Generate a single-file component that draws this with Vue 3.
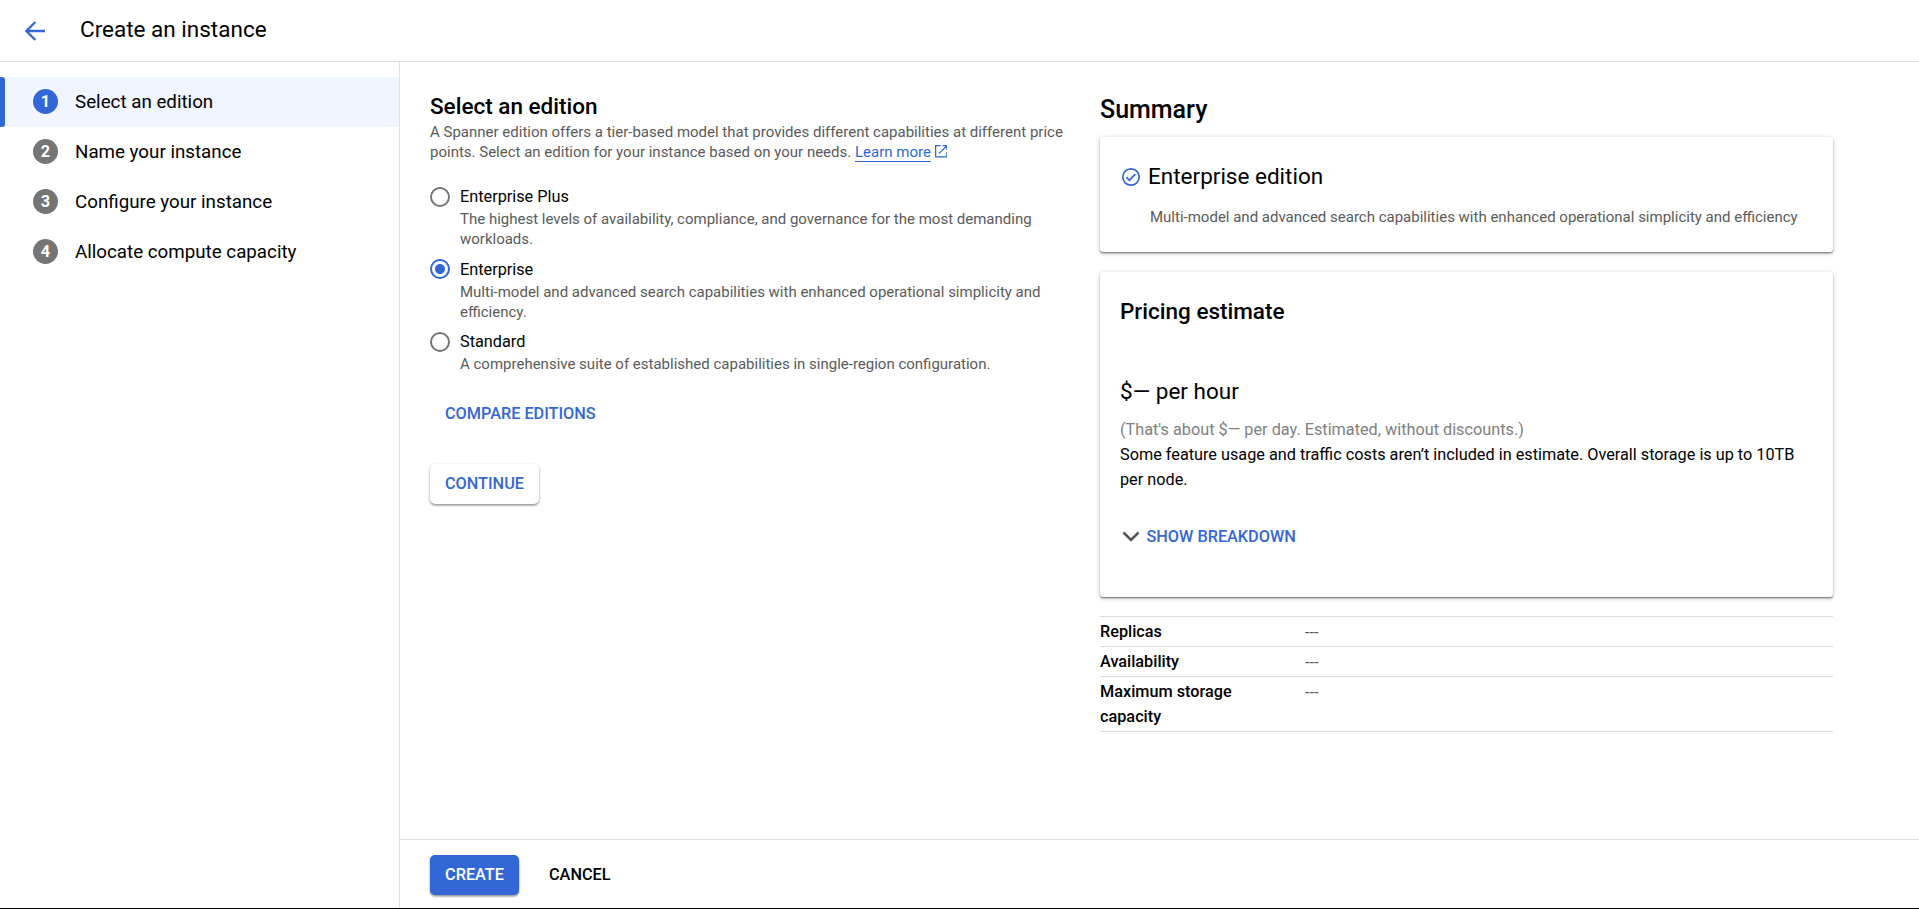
<script setup>
const steps = ['Select an edition', 'Name your instance', 'Configure your instance', 'Allocate compute capacity']

const editions = [
  { name: 'Enterprise Plus', text: 'The highest levels of availability, compliance, and governance for the most demanding workloads.' },
  { name: 'Enterprise', text: 'Multi-model and advanced search capabilities with enhanced operational simplicity and efficiency.', selected: true },
  { name: 'Standard', text: 'A comprehensive suite of established capabilities in single-region configuration.' },
]

const details = [
  { label: 'Replicas', value: '---' },
  { label: 'Availability', value: '---' },
  { label: 'Maximum storage capacity', value: '---' },
]
</script>

<template>
  <div class="page">
    <header class="header">
      <svg class="back" viewBox="0 0 24 24"><path d="M20 12H5.2M12.3 4.800L5.100 12l7.200 7.200" fill="none" stroke="currentColor" stroke-width="1.9" /></svg>
      <h1>Create an instance</h1>
    </header>

    <div class="body">
      <nav class="steps">
        <div v-for="(step, i) in steps" :key="step" class="step" :class="{ active: i === 0 }">
          <span class="num">{{ i + 1 }}</span>
          <span>{{ step }}</span>
        </div>
      </nav>

      <div class="main">
        <div class="content">
          <section class="form">
            <h2>Select an edition</h2>
            <p class="intro">A Spanner edition offers a tier-based model that provides different capabilities at different price points. Select an edition for your instance based on your needs. <a class="link">Learn more</a><svg class="external" viewBox="0 0 18 18"><path d="M8 .9H.9v16.2h16.2V10M11 .9h6.1V7M17 1L5.6 12.4" fill="none" stroke="currentColor" stroke-width="1.8" /></svg></p>

            <div class="editions">
              <div v-for="e in editions" :key="e.name" class="edition">
                <span class="radio" :class="{ on: e.selected }"></span>
                <div>
                  <div class="name">{{ e.name }}</div>
                  <div class="text">{{ e.text }}</div>
                </div>
              </div>
            </div>

            <button class="btn compare">COMPARE EDITIONS</button>
            <button class="btn raised continue">CONTINUE</button>
          </section>

          <aside class="summary">
            <h2>Summary</h2>
            <div class="card edition-card">
              <div class="card-title">
                <svg class="check" viewBox="0 0 22 22"><circle cx="11" cy="11" r="8.2" fill="none" stroke="currentColor" stroke-width="1.7" /><path d="M6.400 11.200l3 3 6-6" fill="none" stroke="currentColor" stroke-width="1.7" /></svg>
                <span>Enterprise edition</span>
              </div>
              <p>Multi-model and advanced search capabilities with enhanced operational simplicity and efficiency</p>
            </div>
            <div class="card pricing">
              <h3>Pricing estimate</h3>
              <div class="price">$— per hour</div>
              <div class="per-day">(That's about $— per day. Estimated, without discounts.)</div>
              <div class="note">Some feature usage and traffic costs aren’t included in estimate. Overall storage is up to 10TB per node.</div>
              <div class="breakdown">
                <svg class="chevron" viewBox="0 0 18 12"><path d="M1.500 1.500L9 9l7.500-7.500" fill="none" stroke="currentColor" stroke-width="2.600" /></svg>
                <span>SHOW BREAKDOWN</span>
              </div>
            </div>
            <dl class="details">
              <div v-for="d in details" :key="d.label" class="row">
                <dt>{{ d.label }}</dt>
                <dd>{{ d.value }}</dd>
              </div>
            </dl>
          </aside>
        </div>

        <footer class="footer">
          <button class="btn raised primary">CREATE</button>
          <button class="btn cancel">CANCEL</button>
        </footer>
      </div>
    </div>
  </div>
</template>

<style>
html, body { margin: 0; background: #fff; overflow: hidden; }
</style>

<style scoped>
* { box-sizing: border-box; }
h1, h2, h3, p, dl, dd { margin: 0; }
.page {
  display: flex; flex-direction: column; width: 1919px; height: 909px;
  border-bottom: 1px solid #000; background: #fff; color: #000;
  font-family: Roboto, "Liberation Sans", sans-serif; font-size: 16.25px;
}
.header { display: flex; height: 62px; padding-left: 20px; border-bottom: 1px solid #e0e0e0; }
.back { width: 30px; height: 30px; margin-top: 16px; color: #3367d6; }
h1 { margin: 14px 0 0 30px; font-size: 22.5px; line-height: 30px; font-weight: 400; }
.body { display: flex; flex: 1; min-height: 0; }

.steps { width: 400px; padding-top: 15px; border-right: 1px solid #e0e0e0; }
.step { display: flex; align-items: center; gap: 17px; height: 50px; padding-left: 33px; font-size: 18.75px; position: relative; }
.step.active { background: #f0f5ff; }
.step.active::before { content: ""; position: absolute; left: 0; top: 0; width: 5px; height: 50px; border-radius: 0 3px 3px 0; background: #3367d6; }
.num { width: 25px; height: 25px; margin-top: -1px; border-radius: 50%; background: #757575; color: #fff; font-size: 16.25px; font-weight: 700; line-height: 25px; text-align: center; }
.active .num { background: #3367d6; }

.main { display: flex; flex-direction: column; flex: 1; min-width: 0; }
.content { display: flex; flex: 1; min-height: 0; padding-left: 30px; }
.form { width: 670px; padding-top: 29px; }
.form h2 { font-size: 22.5px; font-weight: 500; line-height: 30px; margin-bottom: 1px; }
.intro { width: 640px; color: #5a5a5a; font-size: 15px; line-height: 20px; }
.link { color: #3367d6; text-decoration: underline; text-decoration-thickness: 1px; text-underline-offset: 4px; }
.external { width: 12.5px; height: 12.5px; margin-left: 4px; color: #3367d6; vertical-align: -0.5px; }
.editions { display: flex; flex-direction: column; gap: 10.5px; margin-top: 25px; }
.edition { display: flex; gap: 10px; width: 635px; }
.radio { flex: none; width: 20px; height: 20px; border: 2px solid #757575; border-radius: 50%; }
.radio.on { margin-top: -0.5px; border-color: #3367d6; background: radial-gradient(circle, #3367d6 4.6px, transparent 5.4px); }
.name { line-height: 20px; }
.text { margin-top: 2px; color: #5a5a5a; font-size: 15px; line-height: 20px; }

.btn { display: block; height: 40px; padding: 0 15px; border: 0; border-radius: 5px; background: transparent; color: #3367d6; font: 500 16.25px/40px Roboto, "Liberation Sans", sans-serif; }
.raised { background: #fff; box-shadow: 0 1px 3px rgba(0, 0, 0, .2), 0 2px 2px rgba(0, 0, 0, .14), 0 1px 2px rgba(0, 0, 0, .2); }
.compare { margin-top: 20px; }
.continue { width: 109px; margin-top: 30px; }

.summary { width: 733px; padding-top: 32px; }
.summary h2 { font-size: 25px; font-weight: 500; line-height: 31px; }
.card { border-radius: 3px; box-shadow: 0 1px 1px rgba(0, 0, 0, .32), 0 1px 5px rgba(0, 0, 0, .2), 0 2px 2px rgba(0, 0, 0, .16); }
.edition-card { height: 115px; margin-top: 12px; padding: 24px 20px 0; }
.card-title { display: flex; align-items: center; gap: 6px; height: 30px; font-size: 22.5px; line-height: 30px; }
.check { width: 22px; height: 22px; margin-top: 2px; color: #3367d6; }
.edition-card p { margin: 16px 0 0 30px; color: #5a5a5a; font-size: 15px; line-height: 20px; white-space: nowrap; }
.pricing { height: 325px; margin-top: 20px; padding: 24px 20px 0; }
.pricing h3, .price { font-size: 22.5px; line-height: 30px; font-weight: 400; }
.pricing h3 { font-weight: 500; }
.price { margin-top: 50px; }
.per-day, .note { line-height: 25px; }
.per-day { margin-top: 11px; color: #808080; }
.breakdown { display: flex; align-items: center; gap: 6.5px; height: 40px; margin-top: 24px; padding-left: 2px; color: #3367d6; font-weight: 500; }
.chevron { width: 18px; height: 12px; margin-top: 2px; color: #555; }
.details { margin-top: 19px; border-bottom: 1px solid #dcdcdc; }
.row { display: flex; padding: 2px 0; border-top: 1px solid #dcdcdc; line-height: 25px; }
dt { width: 205px; padding-right: 50px; font-weight: 500; }
dd { height: 24px; margin-top: 1px; color: #5a5a5a; }

.footer { display: flex; height: 69px; padding: 15px 30px 0; border-top: 1px solid #e0e0e0; }
.primary { width: 89px; background: #3367d6; color: #fff; }
.cancel { margin-left: 15px; color: #000; }
</style>
